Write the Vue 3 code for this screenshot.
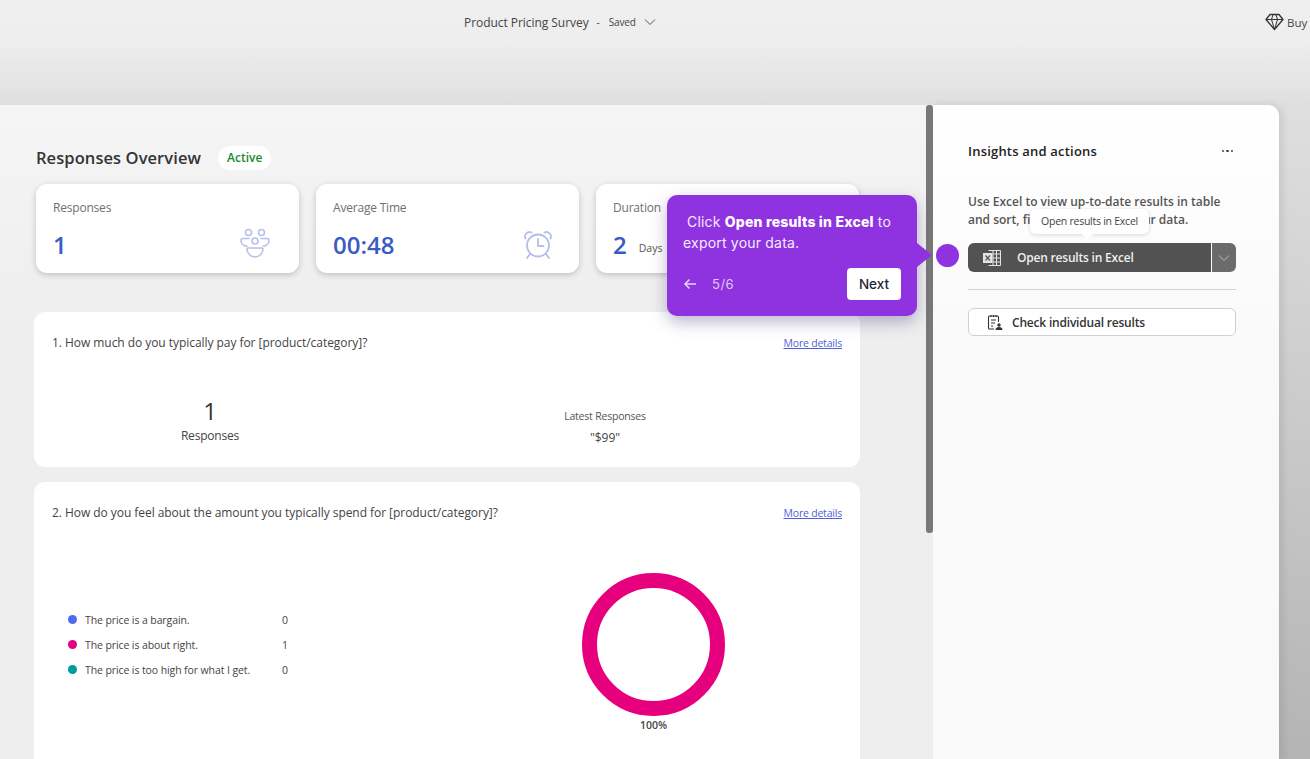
<template>
  <div class="page">
    <header class="topbar">
      <div class="topbar__title">
        <span class="survey-name">Product Pricing Survey</span>
        <span class="dash">-</span>
        <span class="saved">Saved</span>
        <svg class="chev" width="12" height="12" viewBox="0 0 12 12"><path d="M1 3.500 6 8.500 11 3.500" fill="none" stroke="#555" stroke-width="1" /></svg>
      </div>
      <div class="topbar__buy">
        <svg width="19" height="18" viewBox="0 0 19 18" fill="none" stroke="#333" stroke-width="1.300" stroke-linejoin="round">
          <path d="M5 1.500h9l4 5-8.500 10L1 6.500z" />
          <path d="M1 6.500h17M6.500 6.500l3 10 3-10M6.500 6.500 8 1.500M12.500 6.500 11 1.500" stroke-width="1" />
        </svg>
        <span>Buy</span>
      </div>
    </header>

    <main class="workspace">
      <section class="overview">
        <div class="overview__head">
          <h1>Responses Overview</h1>
          <span class="pill">Active</span>
        </div>

        <div class="stats">
          <div class="stat">
            <div class="stat__label">Responses</div>
            <div class="stat__row">
              <span class="stat__value">1</span>
              <svg class="stat__icon" width="32" height="32" viewBox="0 0 32 32" fill="none" stroke="#b4c0ec" stroke-width="1.600">
                <circle cx="9.500" cy="4.500" r="3" />
                <circle cx="22.500" cy="4.500" r="3" />
                <circle cx="16" cy="13" r="3" />
                <path d="M10.500 10.500H4a2 2 0 0 0-2 2c0 3 2.500 5.500 6.500 5.800M21.500 10.500H28a2 2 0 0 1 2 2c0 3-2.500 5.500-6.500 5.800" />
                <path d="M9 20h14a1 1 0 0 1 1 1c0 4-3.500 8-8 8s-8-4-8-8a1 1 0 0 1 1-1z" />
              </svg>
            </div>
          </div>
          <div class="stat">
            <div class="stat__label">Average Time</div>
            <div class="stat__row">
              <span class="stat__value">00:48</span>
              <svg class="stat__icon stat__icon--clock" width="32" height="32" viewBox="0 0 32 32" fill="none" stroke="#b4c0ec" stroke-width="1.800" stroke-linecap="round">
                <circle cx="16" cy="16.500" r="11" />
                <path d="M16 10v7h5.500M3.500 9.500a4.500 4.500 0 0 1 6-6M28.500 9.500a4.500 4.500 0 0 0-6-6M8 25l-3 4M24 25l3 4" />
              </svg>
            </div>
          </div>
          <div class="stat">
            <div class="stat__label">Duration</div>
            <div class="stat__row stat__row--start">
              <span class="stat__value">2</span>
              <span class="stat__unit">Days</span>
            </div>
          </div>
        </div>

        <article class="question">
          <div class="question__head">
            <span>1. How much do you typically pay for [product/category]?</span>
            <a class="more">More details</a>
          </div>
          <div class="answers">
            <div class="answers__count">
              <div class="big">1</div>
              <div class="small">Responses</div>
            </div>
            <div class="answers__latest">
              <div class="latest-label">Latest Responses</div>
              <div class="latest-value">"$99"</div>
            </div>
          </div>
        </article>

        <article class="question question--chart">
          <div class="question__head">
            <span>2. How do you feel about the amount you typically spend for [product/category]?</span>
            <a class="more">More details</a>
          </div>
          <div class="chart-row">
            <ul class="legend">
              <li v-for="item in legend" :key="item.label">
                <i class="dot" :style="{ background: item.color }"></i>
                <span class="legend__label">{{ item.label }}</span>
                <span class="legend__num">{{ item.count }}</span>
              </li>
            </ul>
            <div class="donut-wrap">
              <div class="donut"></div>
              <div class="donut-pct">100%</div>
            </div>
          </div>
        </article>
        <div class="scrollbar"></div>
      </section>

      <aside class="insights">
        <div class="insights__head">
          <h2>Insights and actions</h2>
          <span class="dots"><i></i><i></i><i></i></span>
        </div>
        <p class="insights__text">Use Excel to view up-to-date results in table and sort, filter, and analyze your data.</p>
        <div class="excel-btn">
          <div class="excel-btn__main">
            <svg width="20" height="18" viewBox="0 0 20 18" fill="none" stroke="#e4e4e4" stroke-width="1">
              <path d="M6.500 1.500H18.500V16.500H6.500M11 1.500V16.500M14.500 1.500V16.500M11 5h7.500M11 9h7.500M11 13h7.500" />
              <rect x="1" y="4" width="9.500" height="10" fill="#e4e4e4" stroke="none" />
              <path d="M3.500 6.500l4.500 5M8 6.500l-4.500 5" stroke="#555" stroke-width="1.200" />
            </svg>
            <span>Open results in Excel</span>
          </div>
          <div class="excel-btn__drop">
            <svg width="12" height="12" viewBox="0 0 12 12"><path d="M1 3.500 6 8.500 11 3.500" fill="none" stroke="#bbb" stroke-width="1" /></svg>
          </div>
          <div class="hint">Open results in Excel</div>
        </div>
        <hr class="rule" />
        <div class="check-btn">
          <svg width="16" height="17" viewBox="0 0 16 17" fill="none" stroke="#333" stroke-width="1.100">
            <path d="M7 15H2.500a1 1 0 0 1-1-1V3a1 1 0 0 1 1-1h8a1 1 0 0 1 1 1v5M4 1v2M6.500 1v2M9 1v2M4 6h5M4 9h4M4 12h2" />
            <circle cx="12" cy="11" r="1.700" fill="#333" stroke="none" />
            <path d="M8.500 16c0-2 1.500-3 3.500-3s3.500 1 3.500 3z" fill="#333" stroke="none" />
          </svg>
          <span>Check individual results</span>
        </div>
      </aside>
    </main>

    <div class="tour">
      <p class="tour__text"><span class="tour__first">Click <b>Open results in Excel</b> to</span><br />export your data.</p>
      <div class="tour__foot">
        <div class="tour__nav">
          <svg width="14" height="12" viewBox="0 0 14 12" fill="none" stroke="#e6d4f8" stroke-width="1.500"><path d="M13 6H2M6.500 1.500 2 6l4.500 4.500" /></svg>
          <span>5/6</span>
        </div>
        <button class="tour__next">Next</button>
      </div>
      <i class="tour__arrow"></i>
    </div>
    <div class="tour-dot"></div>
  </div>
</template>

<script setup>
const legend = [
  { label: 'The price is a bargain.', count: 0, color: '#4f6bed' },
  { label: 'The price is about right.', count: 1, color: '#e6007e' },
  { label: 'The price is too high for what I get.', count: 0, color: '#009b9b' }
]
</script>

<style>
html, body {
  margin: 0;
  overflow: hidden;
}
</style>

<style scoped>
.page {
  position: relative;
  width: 1310px;
  height: 759px;
  overflow: hidden;
  font-family: "Open Sans", "Noto Sans", sans-serif;
  color: #333;
  background: linear-gradient(180deg, #efefef 0, #eeeeee 40px, #dfdfdf 105px, #b4b4b4 759px);
}
.topbar {
  display: flex;
  justify-content: space-between;
  height: 105px;
  padding: 14px 0 0 464px;
  box-sizing: border-box;
}
.topbar__title {
  display: flex;
  align-items: center;
  height: 16px;
  font-size: 12px;
  color: #444;
}
.survey-name { letter-spacing: -0.05px; }
.dash { margin-left: 8px; font-size: 10px; }
.saved { margin-left: 9px; font-size: 10px; letter-spacing: -0.2px; }
.chev { margin-left: 8px; }
.topbar__buy {
  display: flex;
  align-items: center;
  gap: 3px;
  width: 45px;
  height: 16px;
  font-size: 11.500px;
  color: #444;
  flex-shrink: 0;
}
.workspace {
  display: flex;
  width: 1279px;
  height: 654px;
}
.overview {
  position: relative;
  width: 933px;
  flex-shrink: 0;
  box-sizing: border-box;
  padding: 42px 0 0 34px;
  overflow: hidden;
  background: linear-gradient(180deg, #f5f5f5 0, #eeeeee 230px);
}
.scrollbar {
  position: absolute;
  top: 0;
  right: 0;
  width: 7px;
  height: 428px;
  border-radius: 3px;
  background: #787878;
}
.overview__head {
  display: flex;
  align-items: center;
  gap: 17px;
  padding-left: 2px;
  height: 22px;
}
.overview__head h1 {
  margin: 0;
  font-size: 16.500px;
  line-height: 22px;
  font-weight: 600;
  letter-spacing: 0.08px;
  color: #333;
}
.pill {
  background: #fff;
  border-radius: 13px;
  padding: 0 9px;
  height: 24px;
  line-height: 24px;
  font-size: 12px;
  font-weight: 600;
  color: #1a8a2e;
}
.stats {
  display: flex;
  gap: 17px;
  margin: 15px 0 0 2px;
}
.stat {
  width: 263px;
  height: 89px;
  box-sizing: border-box;
  padding: 15px 28px 0 17px;
  background: #fff;
  border-radius: 11px;
  box-shadow: 0 2px 6px rgba(0, 0, 0, 0.2);
}
.stat__label {
  font-size: 12px;
  line-height: 17px;
  color: #707070;
  letter-spacing: -0.2px;
}
.stat__row {
  display: flex;
  align-items: center;
  justify-content: space-between;
  margin-top: 12px;
  height: 34px;
}
.stat__row--start { justify-content: flex-start; gap: 12px; }
.stat__value {
  font-size: 24px;
  line-height: 34px;
  font-weight: 600;
  color: #3b5bc4;
}
.stat__icon { margin-top: -3px; }
.stat__icon--clock { margin-right: -3px; margin-top: -1px; }
.stat__unit { font-size: 10.500px; color: #555; margin-top: 5px; }
.question {
  width: 826px;
  height: 155px;
  margin-top: 39px;
  box-sizing: border-box;
  padding: 22px 18px 0;
  background: #fff;
  border-radius: 11px;
}
.question--chart {
  height: 300px;
  margin-top: 15px;
}
.question__head {
  display: flex;
  justify-content: space-between;
  align-items: center;
  height: 17px;
  font-size: 12px;
  color: #444;
  letter-spacing: -0.05px;
}
.more {
  font-size: 10.500px;
  letter-spacing: -0.2px;
  color: #4f5fd8;
  text-decoration: underline;
}
.answers {
  display: flex;
  margin-top: 45px;
}
.answers__count {
  width: 316px;
  text-align: center;
}
.big { font-size: 24px; line-height: 30px; color: #333; }
.small { font-size: 12px; line-height: 20px; color: #444; letter-spacing: -0.2px; }
.answers__latest {
  width: 474px;
  padding-top: 13px;
  text-align: center;
}
.latest-label { font-size: 10.500px; line-height: 14px; color: #555; letter-spacing: -0.2px; }
.latest-value { margin-top: 7px; font-size: 12px; line-height: 16px; color: #444; }
.chart-row {
  display: flex;
  margin-top: 52px;
}
.legend {
  width: 420px;
  list-style: none;
  margin: 34px 0 0;
  padding: 0 0 0 16px;
  box-sizing: border-box;
}
.legend li {
  display: flex;
  align-items: center;
  height: 25px;
  font-size: 10.500px;
  color: #444;
  letter-spacing: -0.1px;
}
.dot {
  width: 9px;
  height: 9px;
  border-radius: 50%;
  margin-right: 8px;
  flex-shrink: 0;
}
.legend__label { width: 197px; }
.donut-wrap {
  width: 143px;
  margin-left: 110px;
  text-align: center;
}
.donut {
  width: 143px;
  height: 143px;
  box-sizing: border-box;
  border: 15px solid #e6007e;
  border-radius: 50%;
}
.donut-pct {
  margin-top: 2px;
  font-size: 10.500px;
  line-height: 14px;
  font-weight: 600;
  color: #444;
}
.insights {
  flex: 1;
  padding: 35px 43px 0 35px;
  background: linear-gradient(180deg, #ffffff 0%, #f9f9f9 40%);
  border-top-right-radius: 11px;
  box-shadow: 3px 0 8px rgba(0, 0, 0, 0.1);
}
.insights__head {
  display: flex;
  justify-content: space-between;
  align-items: center;
  height: 22px;
}
.insights__head h2 {
  margin: 0;
  font-size: 13px;
  font-weight: 600;
  color: #222;
  letter-spacing: 0.2px;
}
.dots { display: flex; gap: 2px; padding-right: 3px; }
.dots i { width: 2.500px; height: 2.500px; border-radius: 50%; background: #444; }
.insights__text {
  margin: 31px 0 0;
  height: 36px;
  font-size: 12px;
  line-height: 18px;
  font-weight: 600;
  color: #555;
}
.excel-btn {
  position: relative;
  display: flex;
  height: 29px;
  margin-top: 14px;
  color: #eee;
}
.excel-btn__main {
  flex: 1;
  display: flex;
  align-items: center;
  gap: 15px;
  padding-left: 14px;
  background: #525252;
  border-radius: 6px 0 0 6px;
  font-size: 12px;
  font-weight: 600;
  letter-spacing: -0.2px;
}
.excel-btn__drop {
  width: 24px;
  margin-left: 1px;
  display: flex;
  align-items: center;
  justify-content: center;
  background: #6b6b6b;
  border-radius: 0 6px 6px 0;
}
.hint {
  position: absolute;
  left: 62px;
  top: -34px;
  width: 119px;
  height: 25px;
  line-height: 25px;
  text-align: center;
  font-size: 10.500px;
  letter-spacing: -0.25px;
  color: #444;
  background: #fff;
  border-radius: 6px;
  box-shadow: 0 1px 4px rgba(0, 0, 0, 0.14);
}
.hint::after {
  content: "";
  position: absolute;
  left: 53px;
  bottom: -4px;
  width: 9px;
  height: 9px;
  background: #fff;
  transform: rotate(45deg);
}
.rule {
  margin: 17px 0 18px;
  border: 0;
  border-top: 1px solid #d4d4d4;
}
.check-btn {
  display: flex;
  align-items: center;
  gap: 9px;
  height: 28px;
  box-sizing: border-box;
  padding-left: 18px;
  background: #fff;
  border: 1px solid #d0d0d0;
  border-radius: 6px;
  font-size: 12px;
  font-weight: 600;
  color: #333;
  letter-spacing: -0.2px;
}
.tour {
  position: absolute;
  left: 667px;
  top: 195px;
  width: 250px;
  height: 121px;
  box-sizing: border-box;
  padding: 16px 16px 0;
  background: #8f33e0;
  border-radius: 10px;
  box-shadow: 0 6px 16px rgba(60, 50, 120, 0.35);
  font-family: Inter, "Open Sans", sans-serif;
  color: #f4ecfc;
}
.tour__text {
  margin: 0;
  font-size: 14px;
  line-height: 21px;
  letter-spacing: 0.2px;
}
.tour__first { margin-left: 4px; }
.tour__text b { font-weight: 800; color: #fff; }
.tour__foot {
  display: flex;
  justify-content: space-between;
  align-items: center;
  margin-top: 15px;
}
.tour__nav {
  display: flex;
  align-items: center;
  gap: 15px;
  font-size: 13px;
  color: #dfc9f5;
  letter-spacing: 0.5px;
}
.tour__next {
  width: 54px;
  height: 32px;
  padding: 0;
  border: 0;
  border-radius: 4px;
  background: #fff;
  font-family: inherit;
  font-size: 13.500px;
  font-weight: 500;
  color: #1f1f3a;
}
.tour__arrow {
  position: absolute;
  right: -15px;
  top: 48px;
  width: 0;
  height: 0;
  border-style: solid;
  border-width: 12px 0 12px 15px;
  border-color: transparent transparent transparent #8f33e0;
}
.tour-dot {
  position: absolute;
  left: 936px;
  top: 244px;
  width: 23px;
  height: 23px;
  border-radius: 50%;
  background: #8f33e0;
}
</style>
